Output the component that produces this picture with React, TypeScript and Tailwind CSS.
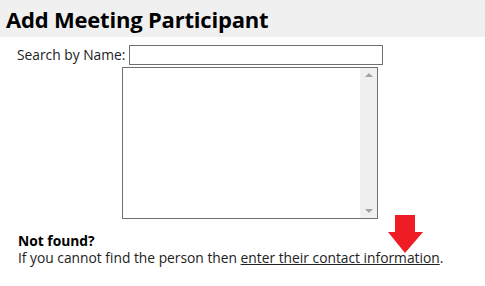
export default function App() {
  return (
    <div className="relative h-[286px] w-[485px] bg-white font-['Open_Sans',sans-serif] text-[13.8px] text-[#222]">
      {/* Header */}
      <div className="flex h-[37px] items-center bg-[#f0f0f0] pl-[6px]">
        <h1 className="text-[22px] font-bold leading-none tracking-[-0.2px] text-black">
          Add Meeting Participant
        </h1>
      </div>

      <div className="pl-[17px] pt-[8px]">
        {/* Search */}
        <div className="flex items-center">
          <label className="leading-[20px]">Search by Name:</label>
          <input
            type="text"
            className="ml-[4px] h-[20px] w-[254px] border border-[#707070] bg-white outline-none"
          />
        </div>

        {/* Listbox */}
        <div className="ml-[105px] mt-[2px] flex h-[152px] w-[256px] border border-[#707070] bg-white">
          <div className="flex-1" />
          <div className="flex w-[17px] flex-col items-center justify-between bg-[#f0f0f0] py-[5px]">
            <span className="h-0 w-0 border-x-[4px] border-b-[4px] border-x-transparent border-b-[#a3a3a3]" />
            <span className="h-0 w-0 border-x-[4px] border-t-[4px] border-x-transparent border-t-[#a3a3a3]" />
          </div>
        </div>

        {/* Not found */}
        <div className="mt-[13px] pl-[1px] leading-[17px]">
          <div className="font-bold text-black">Not found?</div>
          <div>
            If you cannot find the person then{" "}
            <a className="underline">enter their contact information</a>.
          </div>
        </div>
      </div>

      {/* Red arrow */}
      <svg
        className="absolute left-[388px] top-[215px]"
        width="35"
        height="39"
        viewBox="0 0 35 39"
      >
        <polygon points="7,0 27,0 27,17 35,17 17,38 0,17 7,17" fill="#ee1c25" />
      </svg>
    </div>
  );
}
